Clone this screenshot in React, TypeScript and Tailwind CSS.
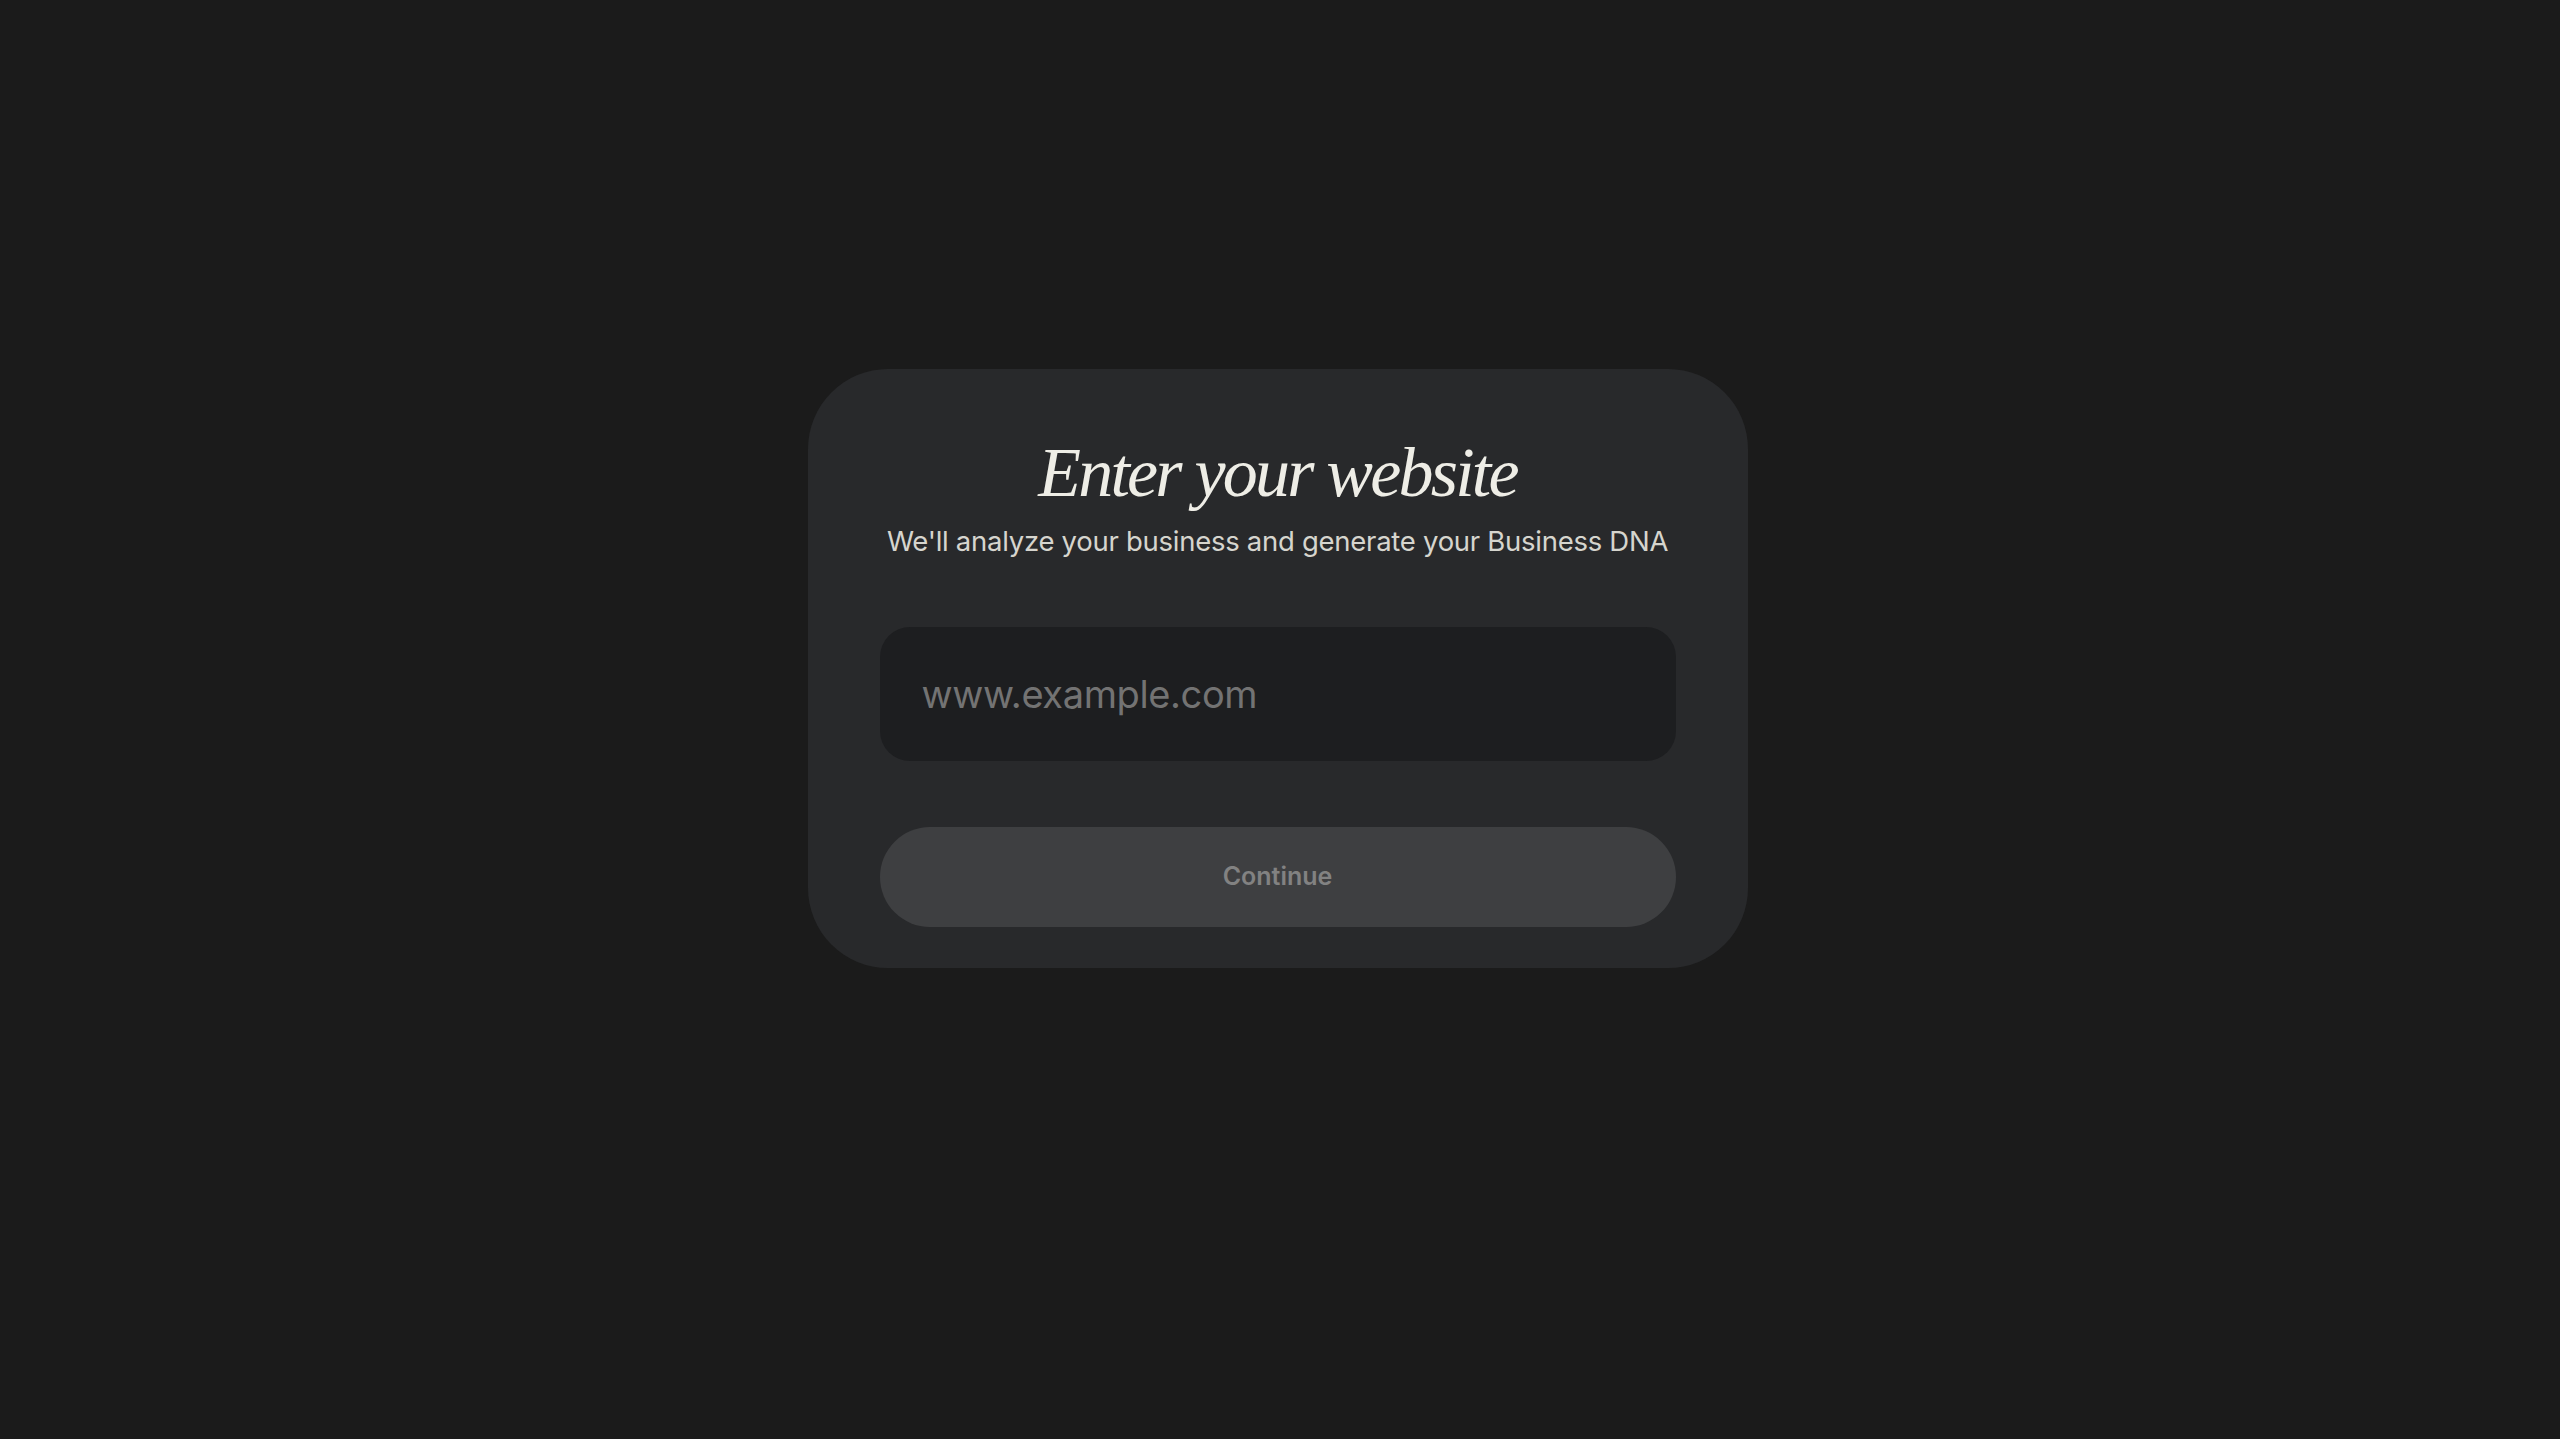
export default function App() {
    return (
        <main className="min-h-screen w-full bg-[#1b1b1b] flex justify-center items-start pt-[369px] pr-[5px]">
            <div className="w-[940px] bg-[#28292b] rounded-[80px] px-[72px] pt-[65px] pb-[41px] flex flex-col items-center">
                <h1 className="text-[70px] leading-[77px] italic tracking-[-0.04em] text-[#eeede6] font-['Liberation_Serif',serif]">
                    Enter your website
                </h1>
                <p className="mt-[13px] text-[27.5px] leading-[34px] text-[#d6d5ce] font-['Inter',sans-serif] tracking-[-0.01em]">
                    We'll analyze your business and generate your Business DNA
                </p>
                <input
                    type="text"
                    placeholder="www.example.com"
                    className="mt-[69px] w-full h-[134px] rounded-[30px] bg-[#1d1e20] px-[42px] text-[38px] text-[#e5e5e5] placeholder:text-[#737373] font-['Inter',sans-serif] tracking-[-0.01em] outline-none"
                />
                <button
                    disabled
                    className="mt-[66px] w-full h-[100px] rounded-full bg-[#3e3f41] text-[25px] font-semibold text-[#828282] font-['Inter',sans-serif]"
                >
                    Continue
                </button>
            </div>
        </main>
    );
}
